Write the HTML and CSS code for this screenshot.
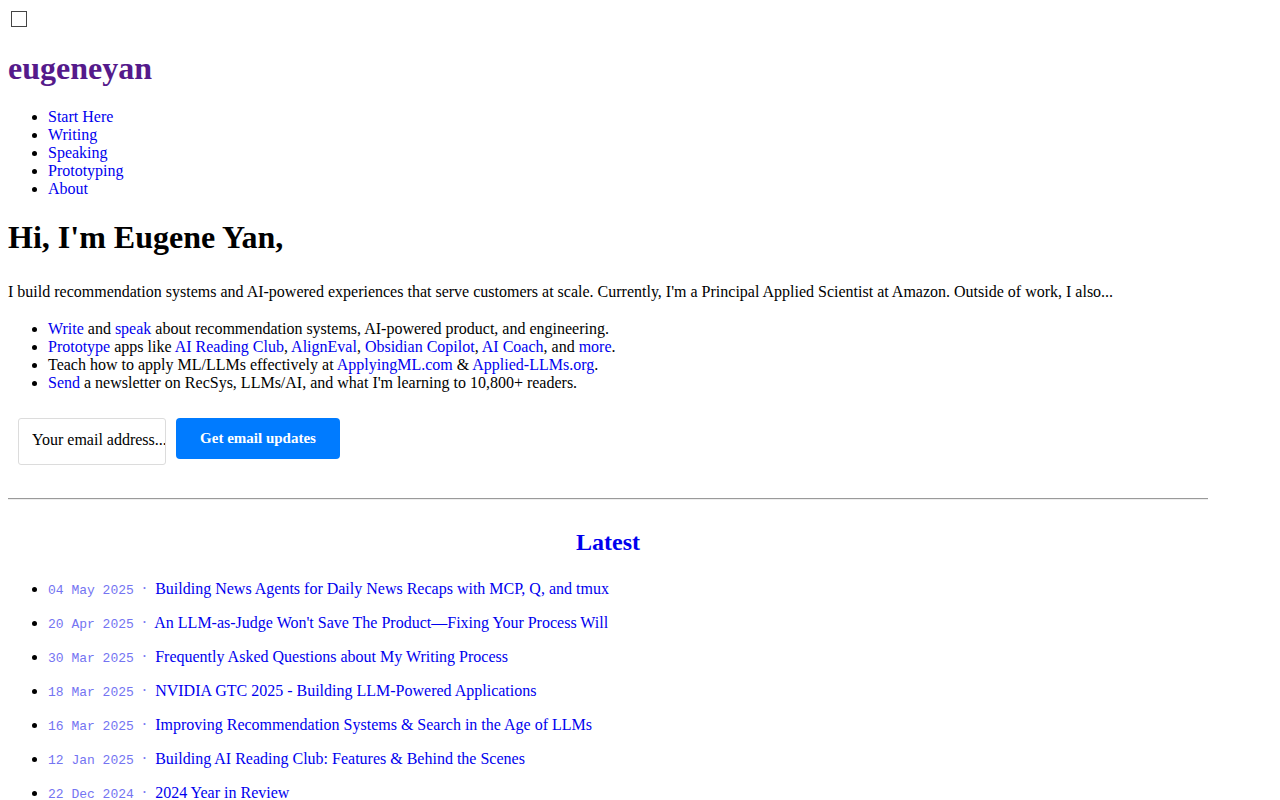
FILE: index.html
```html
<!DOCTYPE html>
<html lang="en">
<head>
<meta charset="utf-8">
<title>eugeneyan</title>
<link rel="stylesheet" href="styles.css">
</head>
<body>
<div class="page">
  <input type="checkbox" class="menu-toggle" aria-label="menu">
  <h1 class="site-title"><a href="#">eugeneyan</a></h1>
  <ul class="nav">
    <li><a href="#">Start Here</a></li>
    <li><a href="#">Writing</a></li>
    <li><a href="#">Speaking</a></li>
    <li><a href="#">Prototyping</a></li>
    <li><a href="#">About</a></li>
  </ul>
  <h1 class="hello">Hi, I'm Eugene Yan,</h1>
  <p class="intro">I build recommendation systems and AI-powered experiences that serve customers at scale. Currently, I'm a Principal Applied Scientist at Amazon. Outside of work, I also...</p>
  <ul class="bullets">
    <li><a href="#">Write</a> and <a href="#">speak</a> about recommendation systems, AI-powered product, and engineering.</li>
    <li><a href="#">Prototype</a> apps like <a href="#">AI Reading Club</a>, <a href="#">AlignEval</a>, <a href="#">Obsidian Copilot</a>, <a href="#">AI Coach</a>, and <a href="#">more</a>.</li>
    <li>Teach how to apply ML/LLMs effectively at <a href="#">ApplyingML.com</a> &amp; <a href="#">Applied-LLMs.org</a>.</li>
    <li><a href="#">Send</a> a newsletter on RecSys, LLMs/AI, and what I'm learning to 10,800+ readers.</li>
  </ul>
  <form class="subscribe">
    <input class="email" type="email" placeholder="Your email address...">
    <button class="submit" type="button">Get email updates</button>
  </form>
  <hr class="divider">
  <h2 class="latest-title"><a href="#">Latest</a></h2>
  <ul class="latest">
    <li><span class="date">04 May 2025</span> <span class="dot">·</span> <a href="#">Building News Agents for Daily News Recaps with MCP, Q, and tmux</a></li>
    <li><span class="date">20 Apr 2025</span> <span class="dot">·</span> <a href="#">An LLM-as-Judge Won't Save The Product—Fixing Your Process Will</a></li>
    <li><span class="date">30 Mar 2025</span> <span class="dot">·</span> <a href="#">Frequently Asked Questions about My Writing Process</a></li>
    <li><span class="date">18 Mar 2025</span> <span class="dot">·</span> <a href="#">NVIDIA GTC 2025 - Building LLM-Powered Applications</a></li>
    <li><span class="date">16 Mar 2025</span> <span class="dot">·</span> <a href="#">Improving Recommendation Systems &amp; Search in the Age of LLMs</a></li>
    <li><span class="date">12 Jan 2025</span> <span class="dot">·</span> <a href="#">Building AI Reading Club: Features &amp; Behind the Scenes</a></li>
    <li><span class="date">22 Dec 2024</span> <span class="dot">·</span> <a href="#">2024 Year in Review</a></li>
    <li><span class="date">08 Dec 2024</span> <span class="dot">·</span> <a href="#">Evaluating the Effectiveness of LLM-Evaluators</a></li>
  </ul>
</div>
</body>
</html>
```

FILE: styles.css
```css
html, body {
  background: #fff;
}
body {
  margin: 8px;
  font-family: "Liberation Serif", "Times New Roman", serif;
  font-size: 16px;
  color: #000;
}
.page {
  max-width: 1200px;
}
a {
  color: #0000ee;
  text-decoration: none;
}
.menu-toggle {
  appearance: none;
  -webkit-appearance: none;
  display: block;
  width: 16px;
  height: 16px;
  box-sizing: border-box;
  margin: 3px 0 0 3px;
  border: 1.5px solid #444;
  border-radius: 0;
  background: #fff;
}
.site-title {
  font-size: 32px;
  margin: 23px 0 21px;
}
.site-title a {
  color: #551a8b;
}
.nav, .bullets, .latest {
  padding-left: 40px;
  margin: 16px 0;
}
.hello {
  font-size: 32px;
  margin: 21px 0 24px;
}
.intro {
  margin: 16px 0;
  line-height: 24px;
}
.subscribe {
  display: flex;
  align-items: flex-start;
  gap: 10px;
  padding: 10px;
  margin: 0;
}
.email {
  width: 148px;
  height: 47px;
  box-sizing: border-box;
  padding: 0 0 3px 13px;
  border: 1px solid #dcdcdc;
  border-radius: 3px;
  font-family: "Liberation Serif", "Times New Roman", serif;
  font-size: 16px;
  color: #000;
}
.email::placeholder {
  color: #000;
  opacity: 1;
}
.submit {
  width: 164px;
  height: 41px;
  box-sizing: border-box;
  border: none;
  border-radius: 4px;
  background: #007bff;
  color: #fff;
  font-family: "Liberation Serif", "Times New Roman", serif;
  font-size: 15px;
  font-weight: bold;
}
.divider {
  margin: 23px 0 0;
  border: none;
  border-top: 1px solid #9a9a9a;
  border-bottom: 1px solid #eeeeee;
}
.latest-title {
  text-align: center;
  font-size: 24px;
  margin: 29px 0 24px;
}
.latest li {
  margin-bottom: 16px;
}
.date {
  font-family: "Liberation Mono", "Courier New", monospace;
  font-size: 13px;
  color: #7474f2;
}
.dot {
  color: #7474f2;
  margin: 0 4px;
}
```
